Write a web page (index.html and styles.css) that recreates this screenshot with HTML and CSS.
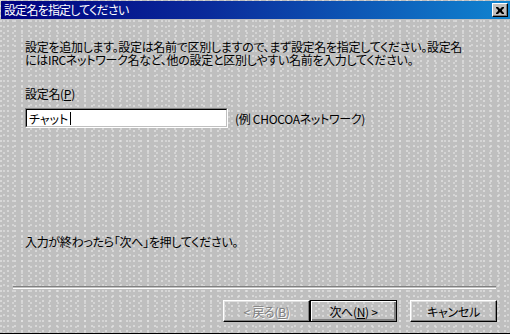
FILE: index.html
```html
<!DOCTYPE html>
<html lang="ja">
<head>
    <meta charset="UTF-8">
    <title>設定名を指定してください</title>
    <link rel="stylesheet" href="styles.css">
</head>
<body>
    <div class="window">
        <div class="titlebar">
            <span class="title">設定名を指定してください</span>
            <button type="button" class="close-btn" aria-label="閉じる">
                <svg width="8" height="7" viewBox="0 0 8 7"><path d="M0 0h2l2 2 2-2h2v1l-2 2v1l2 2v1h-2l-2-2-2 2h-2v-1l2-2v-1l-2-2z" fill="#000"/></svg>
            </button>
        </div>

        <div class="content">
            <p class="intro">設定を追加します。設定は名前で区別しますので、まず設定名を指定してください。設定名</p>
            <p class="intro">にはIRCネットワーク名など、他の設定と区別しやすい名前を入力してください。</p>

            <label class="field-label" for="setting-name">設定名(<u>P</u>)</label>
            <div class="field-row">
                <div class="text-input">
                    <input type="text" id="setting-name" value="チャット">
                    <span class="caret"></span>
                </div>
                <span class="hint">(例 CHOCOAネットワーク)</span>
            </div>

            <p class="next-note">入力が終わったら「次へ」を押してください。</p>
        </div>

        <div class="footer">
            <div class="separator"></div>
            <div class="buttons">
                <button type="button" class="btn" disabled>&lt; 戻る(<u>B</u>)</button>
                <button type="button" class="btn default">次へ(<u>N</u>) &gt;</button>
                <button type="button" class="btn cancel">キャンセル</button>
            </div>
        </div>
    </div>
</body>
</html>
```

FILE: styles.css
```css
html, body {
    margin: 0;
    padding: 0;
}

body {
    width: 510px;
    height: 334px;
    overflow: hidden;
    font-family: "Noto Sans CJK JP", "Liberation Sans", sans-serif;
    font-size: 12px;
    font-feature-settings: "palt";
    color: #000;
    background: #c0c0c0;
}

.window {
    box-sizing: border-box;
    width: 510px;
    height: 334px;
    padding: 1px 0 0 1px;
    display: flex;
    flex-direction: column;
    border-bottom: 1px solid #000;
    background-color: #bfbfbf;
    background-image:
        radial-gradient(circle at 1px 1px, #e6e6e6 0.6px, transparent 0.9px),
        radial-gradient(circle at 4px 3px, #e0e0e0 0.6px, transparent 0.9px);
    background-size: 7px 5px, 9px 6px;
}

/* title bar */
.titlebar {
    height: 18px;
    display: flex;
    align-items: center;
    justify-content: space-between;
    padding: 0 2px 0 3px;
    background: linear-gradient(to right, #000080 0%, #0a2a9a 40%, #1084d0 100%);
}

.title {
    color: #fff;
    font-size: 12px;
    line-height: 18px;
    letter-spacing: -0.8px;
}

.close-btn {
    width: 16px;
    height: 14px;
    padding: 0;
    display: flex;
    align-items: center;
    justify-content: center;
    background: #c0c0c0;
    border: 1px solid;
    border-color: #fff #000 #000 #fff;
    box-shadow: inset -1px -1px 0 #808080;
}

/* main text */
.content {
    padding: 21px 0 0 24px;
    flex: 1;
}

.intro {
    margin: 0;
    height: 13px;
    line-height: 13px;
    letter-spacing: -0.3px;
    white-space: nowrap;
}

.field-label {
    display: block;
    margin-top: 21px;
    line-height: 13px;
    letter-spacing: -0.3px;
}

.field-row {
    display: flex;
    align-items: center;
    margin-top: 8px;
}

.text-input {
    position: relative;
    box-sizing: border-box;
    width: 203px;
    height: 20px;
    border: 1px solid;
    border-color: #808080 #fff #fff #808080;
    background: #fff;
}

.text-input input {
    box-sizing: border-box;
    width: 100%;
    height: 100%;
    margin: 0;
    padding: 0 0 0 2px;
    border: 1px solid;
    border-color: #000 #c0c0c0 #c0c0c0 #000;
    font: inherit;
    letter-spacing: 0;
    outline: none;
}

.caret {
    position: absolute;
    left: 44px;
    top: 3px;
    width: 1px;
    height: 13px;
    background: #000;
}

.hint {
    margin-left: 7px;
    letter-spacing: -0.3px;
}

.next-note {
    margin: 107px 0 0;
    line-height: 13px;
    letter-spacing: -0.3px;
}

/* bottom area */
.footer {
    padding: 0 13px 11px 12px;
}

.separator {
    height: 1px;
    margin-right: 1px;
    border-top: 1px solid #808080;
    border-bottom: 1px solid #fff;
}

.buttons {
    display: flex;
    justify-content: flex-end;
    margin-top: 11px;
}

.btn {
    box-sizing: border-box;
    width: 87px;
    height: 22px;
    padding: 0;
    font: inherit;
    letter-spacing: -0.3px;
    color: #000;
    background: transparent;
    border: 1px solid;
    border-color: #fff #000 #000 #fff;
    box-shadow: inset -1px -1px 0 #808080, inset 1px 1px 0 #dfdfdf;
}

.btn:disabled {
    color: #808080;
    text-shadow: 1px 1px 0 #fff;
}

.btn.default {
    border: 1px solid #000;
    box-shadow: inset 1px 1px 0 #fff, inset -2px -2px 0 #808080, inset -1px -1px 0 #000;
}

.btn.cancel {
    margin-left: 13px;
}
```
